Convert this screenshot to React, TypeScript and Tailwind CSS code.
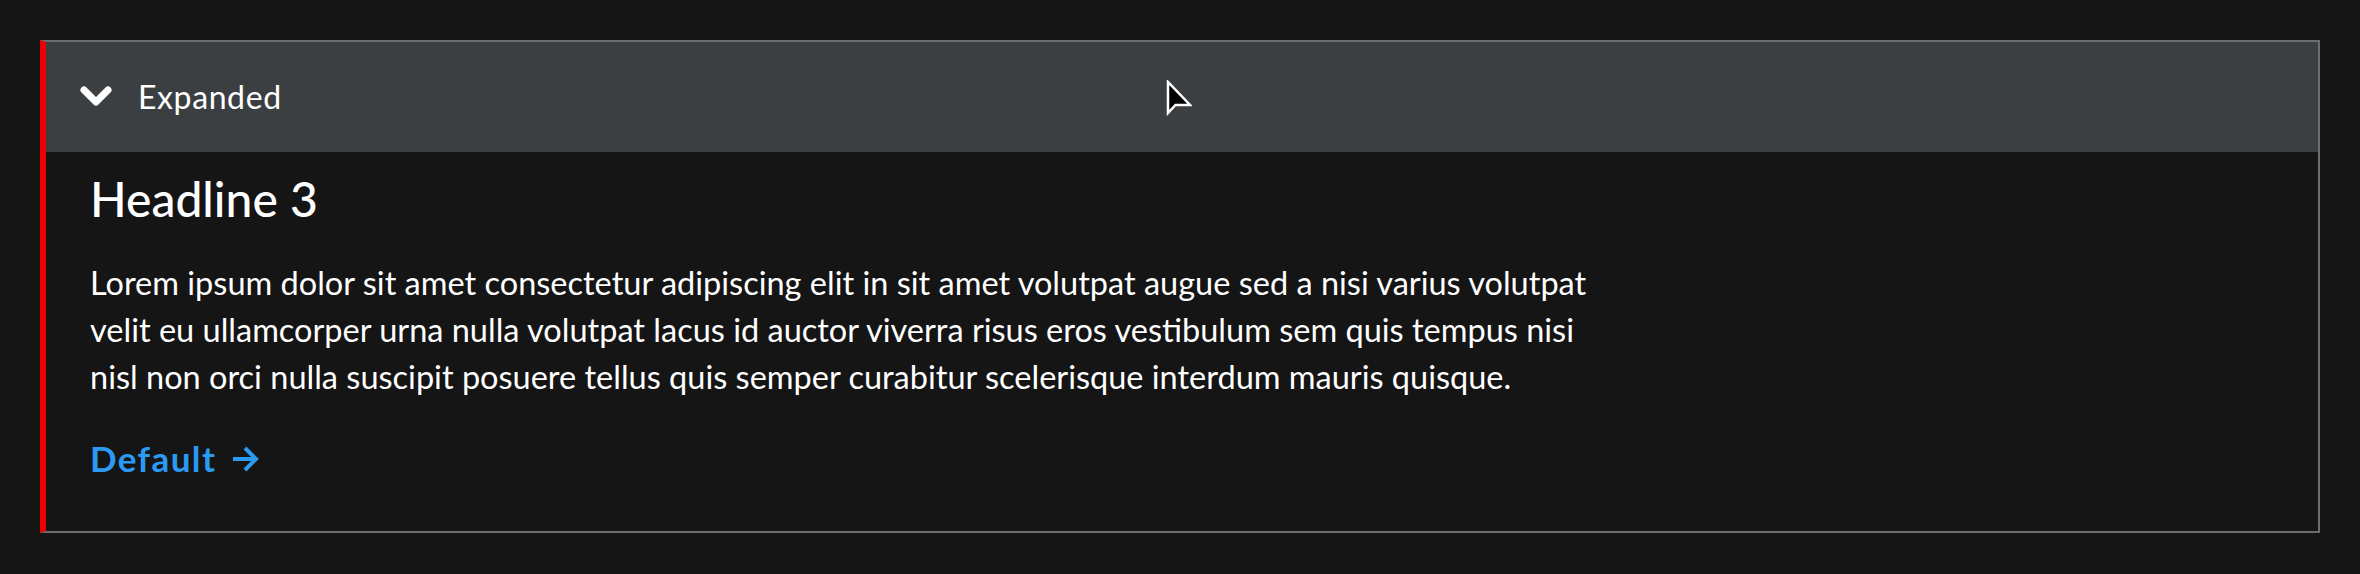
import React from "react";

export default function App() {
  return (
    <div className="min-h-[574px] w-full bg-[#151515] p-[40px]" style={{ fontFamily: "Lato, 'Noto Sans', sans-serif" }}>
      <div className="relative flex flex-col border-l-[6px] border-l-[#ee0000] border-t-2 border-r-2 border-b-2 border-t-[#6a6e73] border-r-[#6a6e73] border-b-[#6a6e73] bg-[#151515]">
        <div className="flex h-[110px] items-center bg-[#3c3f42] pl-[34px]">
          <svg width="32" height="22" viewBox="0 0 32 22" className="shrink-0">
            <path d="M4 4 L16 16 L28 4" fill="none" stroke="#ffffff" strokeWidth="7" strokeLinecap="round" strokeLinejoin="round" />
          </svg>
          <span className="ml-[26px] text-[32px] leading-none tracking-[0.6px] text-white">Expanded</span>
        </div>
        <div className="flex flex-col pl-[44px] pt-[16px] pb-[47px]">
          <h3 className="text-[48px] leading-[62.4px] font-medium text-white">Headline 3</h3>
          <p className="mt-[29px] text-[32.5px] leading-[47px] text-white">
            Lorem ipsum dolor sit amet consectetur adipiscing elit in sit amet volutpat augue sed a nisi varius volutpat
            <br />
            velit eu ullamcorper urna nulla volutpat lacus id auctor viverra risus eros vestibulum sem quis tempus nisi
            <br />
            nisl non orci nulla suscipit posuere tellus quis semper curabitur scelerisque interdum mauris quisque.
          </p>
          <a className="mt-[33px] flex items-center text-[35px] leading-[51px] font-bold tracking-[1.4px] text-[#2b9af3]" href="#">
            <span>Default</span>
            <svg width="28" height="28" viewBox="0 0 28 28" className="ml-[15px]">
              <path d="M2 14 H25 M14 3 L25 14 L14 25" fill="none" stroke="#2b9af3" strokeWidth="4" strokeLinejoin="miter" />
            </svg>
          </a>
        </div>
        <svg width="26" height="36" viewBox="0 0 26 36" className="absolute left-[1120px] top-[38px]">
          <path d="M2 2 L2 33 L9.5 25 L24 25 Z" fill="#000000" stroke="#ffffff" strokeWidth="2.5" strokeLinejoin="miter" />
        </svg>
      </div>
    </div>
  );
}
